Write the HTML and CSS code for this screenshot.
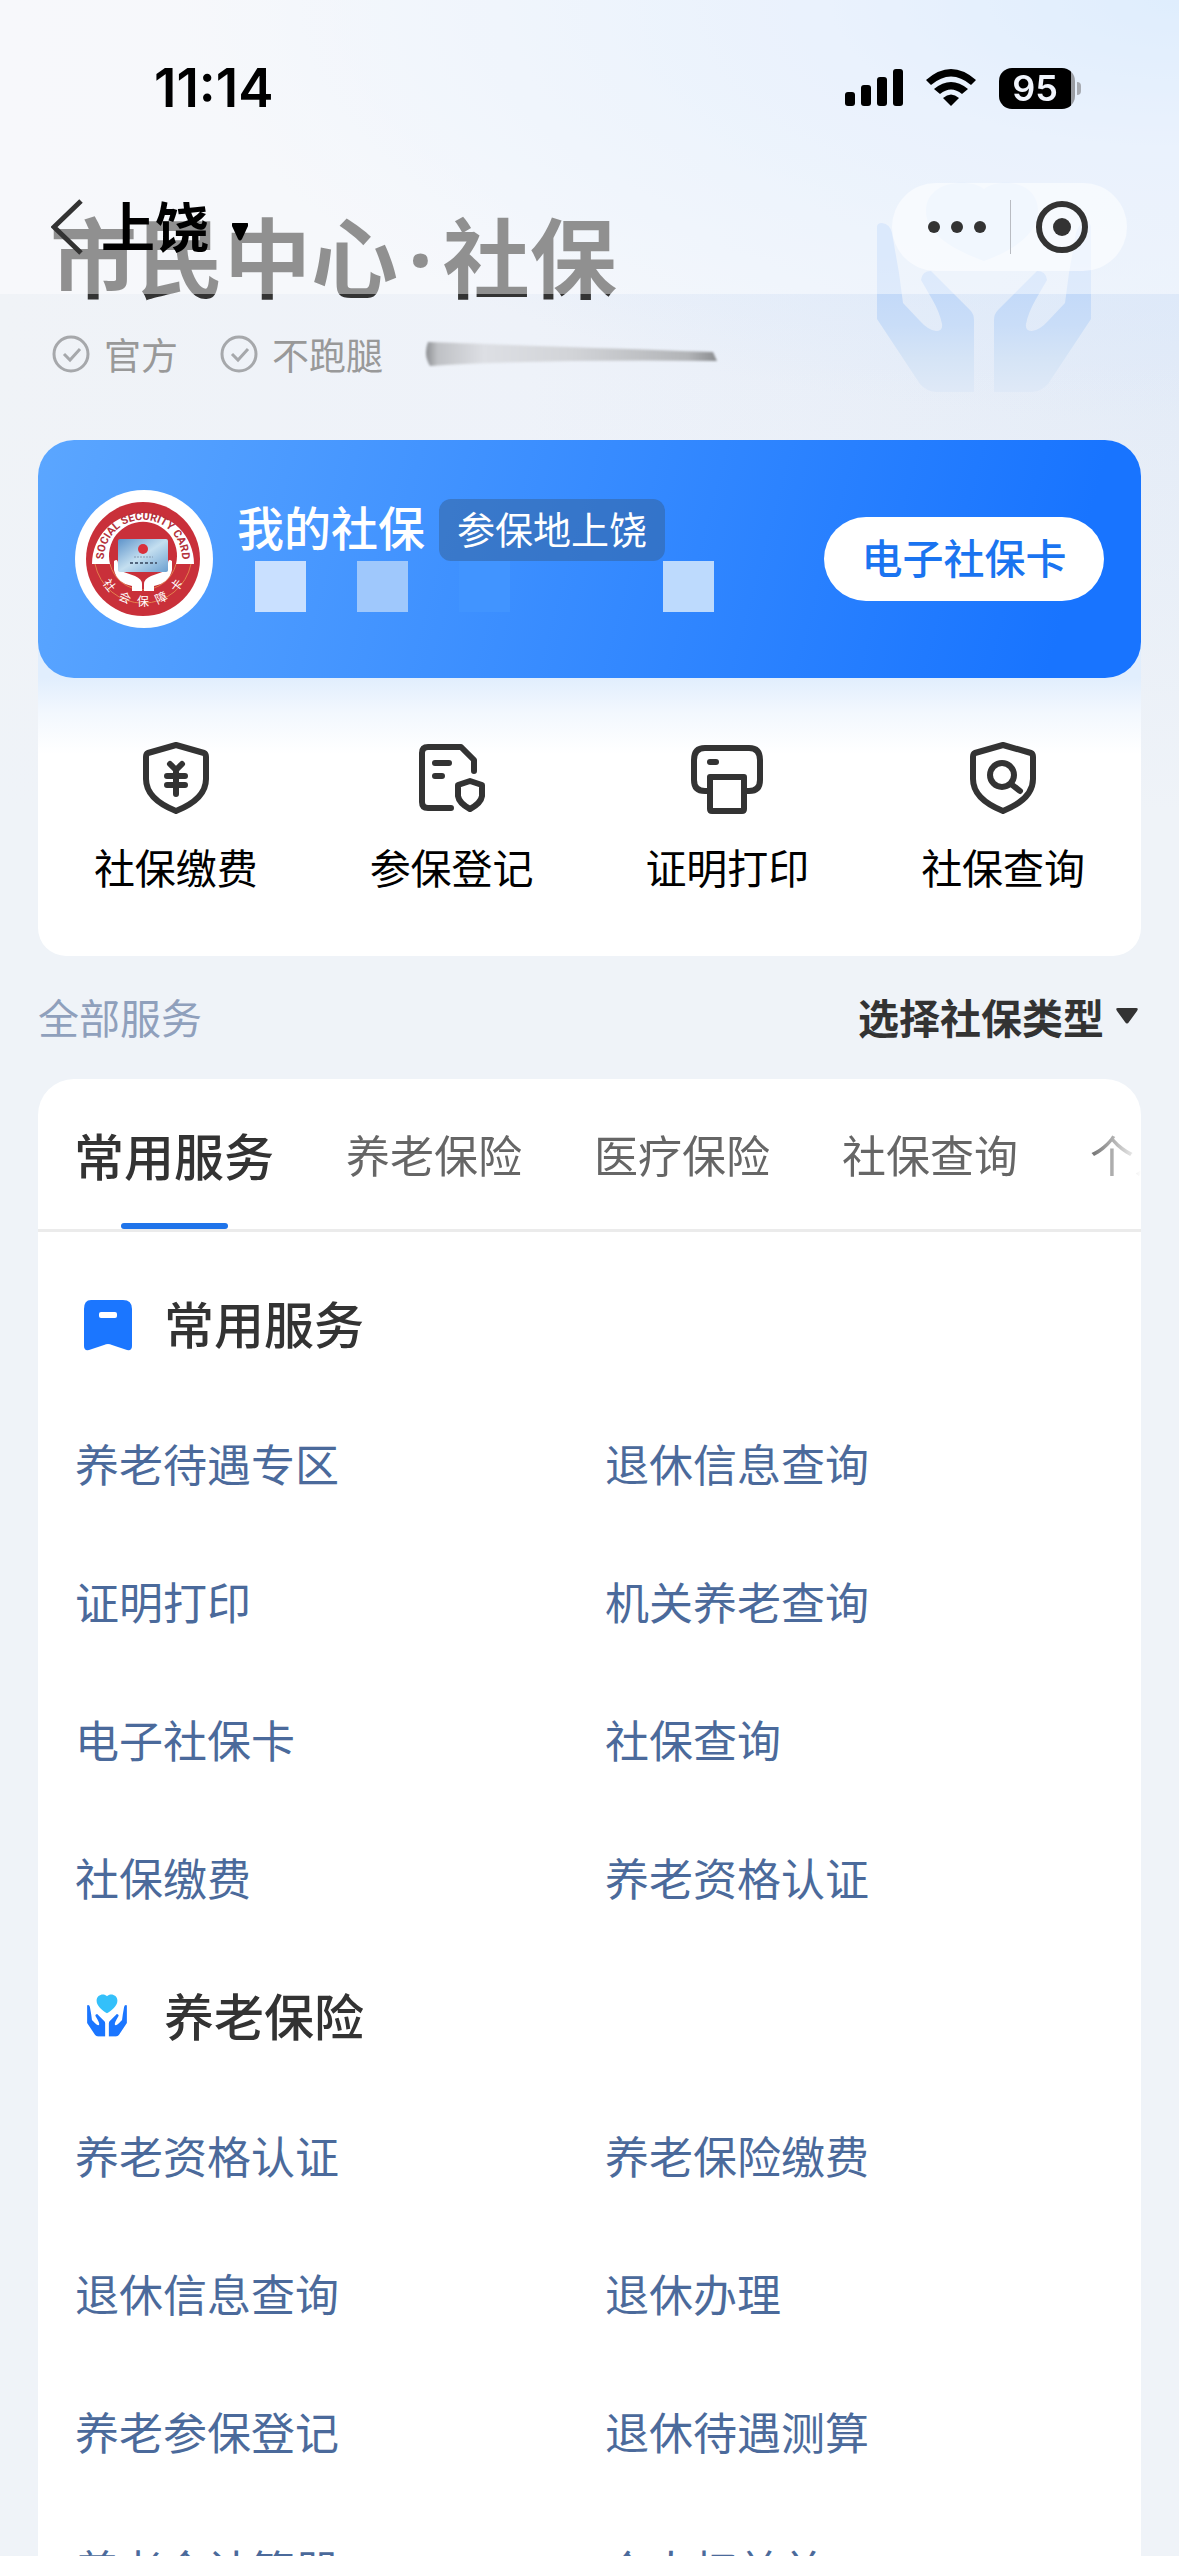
FILE: index.html
```html
<!DOCTYPE html>
<html lang="zh-CN">
<head>
<meta charset="utf-8">
<meta name="viewport" content="width=device-width, initial-scale=1">
<title>市民中心·社保</title>
<link rel="stylesheet" href="styles.css">
</head>
<body>
<svg class="defs" aria-hidden="true">
  <symbol id="hands" viewBox="0 0 224 212">
    <path d="M5 46Q5 42 10 42Q18 43 20 52L27 92L31 122L48 140Q56 149 64 150Q71 150 70 143Q68 132 60 118L49 99Q50 90 59 90L98 129Q102 133 102 139V211H64Q54 210 48 203L5 138Z"/>
    <path d="M219 46Q219 42 214 42Q206 43 204 52L197 92L193 122L176 140Q168 149 160 150Q153 150 154 143Q156 132 164 118L175 99Q174 90 165 90L126 129Q122 133 122 139V211H160Q170 210 176 203L219 138Z"/>
  </symbol>
  <symbol id="check" viewBox="0 0 38 38">
    <circle cx="19" cy="19" r="17"/><path d="M12 19l6 6 10-11"/>
  </symbol>
  <symbol id="shield" viewBox="0 0 72 72">
    <path d="M36 3L64 11Q66 12 66 15V37Q66 57 36 69Q6 57 6 37V15Q6 12 8 11Z"/>
  </symbol>
</svg>

<header class="topbar">
  <div class="status">
    <span class="clock">11:14</span>
    <div class="indicators">
      <svg width="58" height="38" viewBox="0 0 58 38" aria-label="信号">
        <rect x="0" y="23" width="10" height="14" rx="3"/><rect x="16" y="16" width="10" height="21" rx="3"/>
        <rect x="32" y="8" width="10" height="29" rx="3"/><rect x="48" y="0" width="10" height="37" rx="3"/>
      </svg>
      <svg width="50" height="38" viewBox="0 0 50 38" aria-label="无线网络">
        <path d="M0 11Q25-11 50 11L45 16Q25-1 5 16Z"/>
        <path d="M8 20Q25 6 42 20L36 25Q25 16 14 25Z"/>
        <path d="M17 29Q25 22 33 29L25 37Z"/>
      </svg>
      <div class="battery"><span class="battery-level">95</span></div>
    </div>
  </div>
  <nav class="navbar">
    <button class="back" aria-label="返回">
      <svg width="32" height="56" viewBox="0 0 32 56"><path d="M30 2L3 28L30 54"/></svg>
    </button>
    <button class="city">上饶
      <svg width="16" height="18" viewBox="0 0 16 18"><path d="M1 0H15Q17 0 16 3L10 16Q8 19 6 16L0 3Q-1 0 1 0Z"/></svg>
    </button>
    <div class="capsule">
      <button class="capsule-btn more" aria-label="更多">
        <svg width="58" height="12" viewBox="0 0 58 12"><circle cx="6" cy="6" r="6"/><circle cx="29" cy="6" r="6"/><circle cx="52" cy="6" r="6"/></svg>
      </button>
      <button class="capsule-btn close" aria-label="关闭">
        <svg width="54" height="54" viewBox="0 0 54 54"><circle class="ring" cx="27" cy="27" r="23"/><circle cx="27" cy="27" r="9"/></svg>
      </button>
    </div>
  </nav>
</header>

<main class="page">
  <section class="hero">
    <svg class="watermark" width="224" height="212" viewBox="0 0 224 212" aria-hidden="true">
      <defs><linearGradient id="fade" x1="0" y1="0" x2="0" y2="1">
        <stop offset="0.2" stop-color="#bdd6f9"/><stop offset="0.6" stop-color="#c9ddf8"/><stop offset="0.8" stop-color="#d5e4f6"/><stop offset="1" stop-color="#dfe9f7"/>
      </linearGradient></defs>
      <path class="watermark-heart" d="M112 8C128-4 166 0 166 30C166 56 134 72 112 80C90 72 54 56 54 30C54 0 96-4 112 8Z"/>
      <use href="#hands" fill="url(#fade)"/>
    </svg>
    <h1 class="title">市民中心<span class="dot">·</span>社保</h1>
    <ul class="badges">
      <li><svg class="check" width="38" height="38"><use href="#check"/></svg>官方</li>
      <li><svg class="check" width="38" height="38"><use href="#check"/></svg>不跑腿</li>
      <li><svg class="smear" width="292" height="30" viewBox="0 0 292 30" aria-hidden="true">
        <defs>
          <linearGradient id="smear"><stop offset="0" stop-color="#8e9093"/><stop offset="0.04" stop-color="#bfc1c5"/><stop offset="0.2" stop-color="#dddfe4"/><stop offset="0.5" stop-color="#d2d4d8"/><stop offset="0.9" stop-color="#b2b4b7"/><stop offset="1" stop-color="#8b8d90"/></linearGradient>
        </defs>
        <path fill="url(#smear)" d="M3 3Q60 5 288 13L292 22Q120 20 5 27Q-2 16 3 3Z"/>
      </svg></li>
    </ul>
  </section>

  <section class="account">
    <div class="account-card">
      <svg class="emblem" width="138" height="138" viewBox="0 0 138 138" role="img" aria-label="社会保障卡徽标">
        <defs>
          <path id="arc" d="M29.5 75A39 39 0 1 1 106.5 75"/>
          <linearGradient id="chip" x1="0" y1="0" x2="1" y2="1"><stop offset="0" stop-color="#5d93ca"/><stop offset="0.5" stop-color="#c4dff0"/><stop offset="1" stop-color="#6a9fd0"/></linearGradient>
        </defs>
        <circle cx="69" cy="69" r="69" fill="#fff"/>
        <circle cx="68" cy="69" r="57" fill="#c9303a"/>
        <path d="M17 74A51 51 0 1 1 119 74H101A34 34 0 1 0 35 74Z" fill="#fff"/>
        <path d="M20 74A49 49 0 0 0 116 74M35 74A34 34 0 0 0 101 74" fill="none" stroke="#e2804d" stroke-width="1"/>
        <text class="emblem-ring"><textPath href="#arc" startOffset="50%">SOCIAL SECURITY CARD</textPath></text>
        <path d="M39 71Q43 68 43 74V80L60 86Q67 89 67 94V101H57V96Q42 93 39 80ZM97 71Q93 68 93 74V80L76 86Q69 89 69 94V101H79V96Q94 93 97 80Z" fill="#fff"/>
        <rect x="43" y="49" width="50" height="33" rx="2" fill="url(#chip)"/>
        <circle cx="68" cy="59" r="5" fill="#d9303b"/>
        <path d="M59 67H78" stroke="#8499b0" stroke-width="1" stroke-dasharray="2 1"/>
        <path d="M55 73H82" stroke="#52657d" stroke-width="2" stroke-dasharray="3 2"/>
        <g class="emblem-name">
          <text x="68" y="116" transform="rotate(52 68 69)">社</text>
          <text x="68" y="116" transform="rotate(25 68 69)">会</text>
          <text x="68" y="116">保</text>
          <text x="68" y="116" transform="rotate(-25 68 69)">障</text>
          <text x="68" y="116" transform="rotate(-52 68 69)">卡</text>
        </g>
      </svg>
      <div class="account-info">
        <div class="account-head"><h2>我的社保</h2><span class="tag">参保地上饶</span></div>
        <div class="mosaic" aria-hidden="true">
          <i class="m1"></i><i class="m2"></i><i class="m3"></i><i></i><i class="m5"></i>
        </div>
      </div>
      <button class="card-btn">电子社保卡</button>
    </div>
    <div class="quick">
      <a href="#pay"><svg width="72" height="72" viewBox="0 0 72 72"><use href="#shield"/><path d="M30 22L36 28L42 22M27 34H45M27 43H45M36 30V52"/></svg>社保缴费</a>
      <a href="#register"><svg width="72" height="72" viewBox="0 0 72 72"><path d="M35 66H12Q6 66 6 60V11Q6 5 12 5H45L58 18V29M19 21H33M19 34H26"/><path d="M54 39L66 43V54Q65 61 54 67Q43 61 42 54V43Z"/></svg>参保登记</a>
      <a href="#print"><svg width="72" height="72" viewBox="0 0 72 72"><path d="M18 49H14Q3 49 3 38V18Q3 6 14 6H58Q69 6 69 18V38Q69 49 58 49H54M19 20H25"/><path d="M19 35H53V67Q53 69 51 69H21Q19 69 19 67Z"/></svg>证明打印</a>
      <a href="#query"><svg width="72" height="72" viewBox="0 0 72 72"><use href="#shield"/><circle cx="35" cy="33" r="12"/><path d="M44 42L53 49"/></svg>社保查询</a>
    </div>
  </section>

  <div class="filter">
    <h2>全部服务</h2>
    <button class="filter-btn">选择社保类型
      <svg width="22" height="16" viewBox="0 0 22 16"><path d="M2 0H20Q23 0 21 3L13 14Q11 17 9 14L1 3Q-1 0 2 0Z"/></svg>
    </button>
  </div>

  <section class="services">
    <div class="tabs-wrap">
      <div class="tabs" role="tablist">
        <button class="tab active" role="tab" aria-selected="true">常用服务</button>
        <button class="tab" role="tab">养老保险</button>
        <button class="tab" role="tab">医疗保险</button>
        <button class="tab" role="tab">社保查询</button>
        <button class="tab" role="tab">个人服务</button>
      </div>
    </div>
    <div class="groups">
      <section>
        <h3><svg width="64" height="52" viewBox="0 0 64 52"><path fill="#1b76ff" d="M16 1H48Q57 1 57 10V47Q57 52 52 51L37 46Q33 44 29 46L14 51Q9 52 9 47V10Q9 1 16 1Z"/><rect x="24" y="13" width="18" height="6" rx="2" fill="#fff"/></svg>常用服务</h3>
        <div class="links">
          <a href="#s1">养老待遇专区</a><a href="#s2">退休信息查询</a>
          <a href="#s3">证明打印</a><a href="#s4">机关养老查询</a>
          <a href="#s5">电子社保卡</a><a href="#s6">社保查询</a>
          <a href="#s7">社保缴费</a><a href="#s8">养老资格认证</a>
        </div>
      </section>
      <section>
        <h3><svg width="64" height="52" viewBox="-60 -34 344 280"><use href="#hands" width="224" height="212" fill="#1b76ff"/><path fill="#34c0fa" d="M112-6C130-24 168-14 168 18C168 46 136 70 112 86C88 70 56 46 56 18C56-14 94-24 112-6Z"/></svg>养老保险</h3>
        <div class="links">
          <a href="#p1">养老资格认证</a><a href="#p2">养老保险缴费</a>
          <a href="#p3">退休信息查询</a><a href="#p4">退休办理</a>
          <a href="#p5">养老参保登记</a><a href="#p6">退休待遇测算</a>
          <a href="#p7">养老金计算器</a><a href="#p8">个人权益单</a>
        </div>
      </section>
    </div>
  </section>
</main>
</body>
</html>
```
FILE: styles.css
```css
* { box-sizing: border-box; margin: 0; padding: 0; }

body {
  font-family: "Noto Sans CJK SC", sans-serif;
  color: #333;
  background: #eff3f8;
}
button { font: inherit; color: inherit; background: none; border: 0; }
a { color: inherit; text-decoration: none; }
ul { list-style: none; }
svg { display: block; flex: none; }
.defs { position: absolute; width: 0; height: 0; }

/* Fixed bar over the scrolling page */
.topbar {
  position: fixed;
  inset: 0 0 auto 0;
  z-index: 2;
  padding-bottom: 23px;
  background: rgba(255, 255, 255, .46);
}
.status {
  display: flex;
  align-items: center;
  justify-content: space-between;
  padding: 64px 104px 0 154px;
  height: 112px;
  color: #000;
}
.clock { font: 600 53px/48px Inter, sans-serif; }
.indicators { display: flex; align-items: center; gap: 23px; }
.battery {
  position: relative;
  width: 76px;
  height: 41px;
  border-radius: 13px;
  background: linear-gradient(90deg, #000 72px, #9a9da3 72px);
  text-align: center;
}
.battery::after {
  content: "";
  position: absolute;
  left: 78px;
  top: 14px;
  width: 4px;
  height: 13px;
  border-radius: 0 6px 6px 0;
  background: #a7abb2;
}
.battery-level { display: block; padding-right: 4px; font: 600 36px/41px Inter, sans-serif; color: #f1f5fd; }

.navbar {
  display: flex;
  align-items: center;
  height: 88px;
  margin-top: 71px;
  padding: 0 52px 0 51px;
}
.back { margin-right: 18px; }
.back path { fill: none; stroke: #333; stroke-width: 5; }
.city {
  display: flex;
  align-items: center;
  gap: 23px;
  padding-bottom: 4px;
  font-size: 54px;
  line-height: 64px;
  font-weight: 700;
  color: #000;
}
.city svg { margin-top: 14px; }
.capsule {
  display: flex;
  margin-left: auto;
  width: 235px;
  height: 88px;
  border-radius: 44px;
  background: rgba(255, 255, 255, .55);
}
.capsule-btn { flex: 1; display: flex; align-items: center; justify-content: center; fill: #333; }
.more { padding-left: 12px; }
.close { position: relative; padding-right: 12px; }
.close::before {
  content: "";
  position: absolute;
  left: 0;
  top: 17px;
  bottom: 17px;
  width: 1px;
  background: #b9bcc2;
}
.ring { fill: none; stroke: #333; stroke-width: 6; }

.page {
  height: 100vh;
  overflow-y: auto;
  scrollbar-width: none;
  padding: 0 38px;
  background:
    linear-gradient(180deg, rgba(239, 243, 248, 0) 40%, #eff3f8 90%),
    radial-gradient(ellipse 1000px 420px at 100% 0, #c4defc 0, #d8e7fb 35%, rgba(226, 236, 250, 0) 100%),
    linear-gradient(90deg, #f0f3f7 0%, #eef2f9 45%, #e3ebf7 100%);
  background-size: 100% 900px;
  background-repeat: no-repeat;
  background-color: #eff3f8;
}

.hero { position: relative; padding: 206px 12px 66px; }
.watermark { position: absolute; right: 45px; top: 181px; }
.watermark-heart { fill: #c6dcfa; }
.title { position: relative; font-size: 87px; line-height: 96px; font-weight: 700; white-space: nowrap; }
.dot { padding: 0 10px; font-family: "Open Sans", sans-serif; line-height: 1px; }
.badges {
  display: flex;
  align-items: center;
  gap: 42px;
  margin-top: 32px;
  padding-left: 2px;
  font-size: 37px;
  line-height: 40px;
  color: #999;
}
.badges li { display: flex; align-items: center; gap: 14px; }
.check { fill: none; stroke: #a6a8ab; stroke-width: 3; }
.smear { filter: blur(1px); }

.account { border-radius: 36px 36px 28px 28px; background: #fff; }
.account-card {
  position: relative;
  display: flex;
  align-items: center;
  height: 238px;
  padding: 0 37px;
  border-radius: 36px;
  color: #fff;
  background: linear-gradient(105deg, #5ba6ff 0%, #1874ff 92%);
}
.quick {
  display: grid;
  grid-template-columns: repeat(4, 1fr);
  margin-top: -36px;
  padding: 100px 0 60px;
  border-radius: 0 0 28px 28px;
  background: linear-gradient(180deg, #e1eefd 36px, #f3f8fe 72px, rgba(255, 255, 255, 0) 112px);
}
.quick a {
  display: flex;
  flex-direction: column;
  align-items: center;
  gap: 22px;
  font-size: 41px;
  line-height: 60px;
  color: #000;
}
.quick svg { fill: none; stroke: #333; stroke-width: 6; stroke-linecap: round; stroke-linejoin: round; }

.emblem-ring { font: 700 11px Roboto, sans-serif; fill: #b3303a; text-anchor: middle; }
.emblem-name { font-size: 12px; fill: #fff; text-anchor: middle; }
.account-info { align-self: flex-start; margin: 59px 0 0 24px; }
.account-head { display: flex; align-items: center; gap: 14px; }
.account-head h2 { padding-bottom: 8px; font-size: 47px; line-height: 54px; font-weight: 500; }
.tag {
  padding: 0 18px 4px;
  border-radius: 12px;
  font-size: 38px;
  line-height: 58px;
  background: rgba(51, 95, 150, .5);
}
.mosaic { display: flex; margin-left: 18px; gap: 51px; }
.mosaic i { width: 51px; height: 51px; }
.m1 { background: #c9e0ff; }
.m2 { background: #9fc8fc; }
.m3 { background: #4194ff; }
.m5 { background: #bddafd; }
.card-btn {
  margin-left: auto;
  width: 280px;
  height: 84px;
  border-radius: 42px;
  font-size: 41px;
  font-weight: 500;
  line-height: 60px;
  padding-bottom: 6px;
  color: #1a74f0;
  background: #fff;
}

.filter {
  display: flex;
  align-items: center;
  justify-content: space-between;
  height: 123px;
  padding-bottom: 4px;
  font-size: 41px;
  line-height: 60px;
}
.filter h2 { font-size: 41px; font-weight: 400; color: #8fa0bc; }
.filter-btn { display: flex; align-items: center; gap: 12px; padding-right: 3px; font-weight: 700; }
.filter-btn svg { fill: #333; }

.services { overflow: hidden; border-radius: 36px 36px 0 0; background: #fff; }
.tabs-wrap { border-bottom: 3px solid #ebebeb; }
.tabs {
  display: flex;
  gap: 72px;
  height: 150px;
  padding-left: 36px;
  overflow: hidden;
  -webkit-mask-image: linear-gradient(270deg, transparent 0, #000 54px);
  mask-image: linear-gradient(270deg, transparent 0, #000 54px);
}
.tab { position: relative; flex: none; font-size: 44px; line-height: 60px; color: #666; }
.tab.active { font-size: 50px; font-weight: 500; color: #333; }
.tab.active::after {
  content: "";
  position: absolute;
  left: calc(50% - 53px);
  bottom: 0;
  width: 107px;
  height: 6px;
  border-radius: 3px;
  background: #1f74ea;
}

.groups { padding: 22px 36px 0 37px; }
.groups h3 {
  display: flex;
  align-items: center;
  gap: 25px;
  height: 140px;
  padding-bottom: 4px;
  font-size: 50px;
  font-weight: 500;
}
.groups h3 svg { margin-top: 6px; }
.links { display: grid; grid-template-columns: 1fr 1fr; column-gap: 30px; }
.links a { font-size: 44px; line-height: 138px; color: #4b6a9b; white-space: nowrap; }
```
